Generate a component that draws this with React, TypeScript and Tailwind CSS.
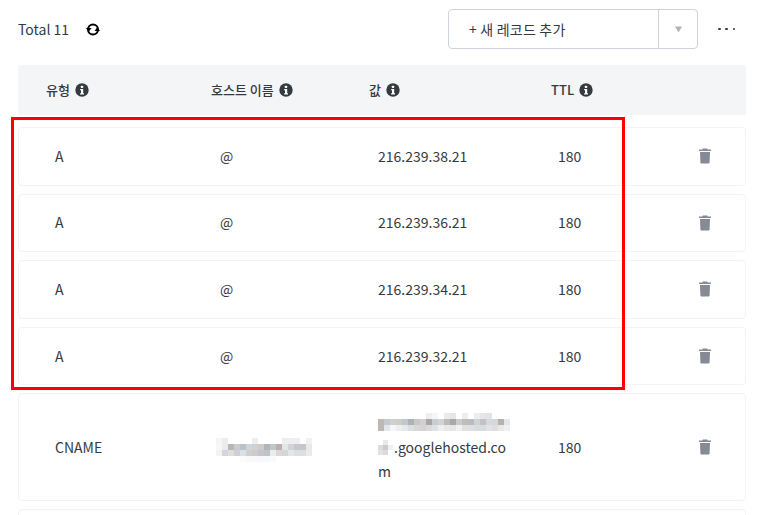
import React from "react";

const font = { fontFamily: '"Noto Sans CJK KR", "Noto Sans", sans-serif' };

function Info() {
  return (
    <svg width="14" height="14" viewBox="0 0 14 14" className="shrink-0">
      <circle cx="7" cy="7" r="6.7" fill="#343a40" />
      <rect x="5.800" y="2.700" width="2.400" height="2.200" rx="0.600" fill="#fff" />
      <path d="M5.200 6h3v4.200h.8v1.300H5.100v-1.300h.9V7.200h-.8z" fill="#fff" />
    </svg>
  );
}

function Trash() {
  return (
    <svg width="14" height="16" viewBox="0 0 14 16">
      <path d="M4.800 .6h4.400l.4 1H13v1.500H1V1.600h3.400z" fill="#868a94" />
      <path d="M2 3.900h10l-.4 10.700a.8.8 0 0 1-.8.8H3.200a.8.8 0 0 1-.8-.8z" fill="#868a94" />
    </svg>
  );
}

function Head({ label, className }: { label: string; className: string }) {
  return (
    <div className={`flex items-center gap-[5px] text-[13px] font-medium text-[#343a40] ${className}`}>
      <span>{label}</span>
      <Info />
    </div>
  );
}

function Row({ ip }: { ip: string }) {
  return (
    <div className="flex h-[58.6px] items-center rounded-[4px] border border-[#f1f3f5] text-[14px] text-[#343a40]">
      <div className="w-[201px] pl-[36px]">A</div>
      <div className="w-[158px]">@</div>
      <div className="w-[180px]">{ip}</div>
      <div className="w-[140px]">180</div>
      <Trash />
    </div>
  );
}

const hostRows = [
  ["#f5f5f5", "#ececec", "#fff", "#fff", "#fff", "#fff", "#eeeeee", "#fff", "#fff", "#fff", "#fff", "#eeeeee", "#eeeeee", "#eeeeee", "#fff", "#f0f0f0"],
  ["#f7f7f7", "#ebebeb", "#b9b6b3", "#c8ccd0", "#bdc2c8", "#ccd6de", "#d4d0cd", "#cfc9c8", "#b4b5ba", "#c2c6cb", "#b9b0ae", "#e2e6e9", "#d0d4d8", "#c5c8cc", "#c3c6cb", "#e8e8e8"],
  ["#f6f3ef", "#d3d6da", "#e0dedc", "#ccd0d4", "#dde0e3", "#cdd0d3", "#cccccc", "#c4c7ca", "#bfc3c7", "#ebeced", "#d8d8d8", "#d6d6d6", "#e3e5e6", "#dcdfe1", "#dcdfe1", "#eaeaea"],
  ["#fff", "#fff", "#fff", "#fff", "#fbfbfb", "#f9f9f9", "#f9f9f9", "#f8f8fb", "#f6f8fb", "#fafafa", "#fff", "#fff", "#fff", "#fff", "#fff", "#fff"],
];

const valueRows = [
  ["#fff", "#fff", "#fff", "#fff", "#fff", "#fff", "#fff", "#fff", "#f1eded", "#f3f7fa", "#fff", "#ebebeb", "#e6e6e6", "#fff", "#eeeeee", "#fff", "#eeeeee", "#e6e6e6", "#e3e3e3", "#fff", "#fff", "#fff"],
  ["#bdb9b4", "#c3cbd1", "#d2cfcd", "#cfcdca", "#c4c8cc", "#aeb3b8", "#c9c9c9", "#cfd1d3", "#a9a5a6", "#c6ced2", "#d5d2d0", "#b9bbbc", "#a8a8a8", "#c9cbcb", "#c0bdb8", "#b6bcc2", "#cfd3d6", "#bfc3c8", "#d6d9dc", "#d6d6d6", "#b5b1ac", "#e4e7ea"],
  ["#bdb9b4", "#e4e6e8", "#f3f6fa", "#eeeeee", "#e6e8ea", "#dcdfe1", "#d8d8d8", "#d6d3d2", "#d8dadc", "#dfe2e5", "#eeeff0", "#e8e8e8", "#e3e6e8", "#f0f0f0", "#e0e0e0", "#dddfe1", "#d9dcdf", "#d9dcdf", "#e3e3e5", "#dedede", "#e8e8ea", "#eef0f2"],
];

const stubRows = [
  ["#fff", "#e8e8e8", "#fff"],
  ["#dedcda", "#c8ccd2", "#eef0f3"],
  ["#e4e2e2", "#dcdcdc", "#fff"],
];

function Mosaic({ rows, cell }: { rows: string[][]; cell: number }) {
  const w = rows[0].length * cell;
  const h = rows.length * cell;
  return (
    <svg width={w} height={h} viewBox={`0 0 ${w} ${h}`} className="block shrink-0">
      {rows.map((row, r) =>
        row.map((c, i) => <rect key={`${r}-${i}`} x={i * cell} y={r * cell} width={cell} height={cell} fill={c} />)
      )}
    </svg>
  );
}

export default function App() {
  return (
    <div style={font} className="relative h-[515px] w-[757px] overflow-hidden bg-white pl-[18px] pr-[11px] pt-[9px]">
      <div className="flex h-[40px] items-center">
        <span className="text-[14px] text-[#343a40]">Total 11</span>
        <svg width="16" height="15" viewBox="0 0 16 15" className="ml-[16px]">
          <circle cx="8" cy="7.500" r="5" fill="none" stroke="#000" strokeWidth="2" />
          <path d="M1 6h5.500L3.700 9.800z" fill="#000" />
          <path d="M15 9H9.500l2.800-3.800z" fill="#000" />
        </svg>
        <div className="ml-auto flex h-[40px] w-[250px] rounded-[4px] border border-[#ced4da] text-[14px] tracking-[0.2px] text-[#343a40]">
          <div className="flex flex-1 items-center pl-[20px]">+ 새 레코드 추가</div>
          <div className="flex w-[39px] items-center justify-center border-l border-[#ced4da]">
            <svg width="7" height="7" viewBox="0 0 7 7"><path d="M0 .5h7L3.500 6.500z" fill="#adb5bd" /></svg>
          </div>
        </div>
        <div className="ml-[20px] mr-[11px] flex w-[17px] justify-between">
          <span className="h-[2.500px] w-[2.500px] rounded-full bg-[#343a40]" />
          <span className="h-[2.500px] w-[2.500px] rounded-full bg-[#343a40]" />
          <span className="h-[2.500px] w-[2.500px] rounded-full bg-[#343a40]" />
        </div>
      </div>

      <div className="mt-[16px] flex h-[50px] items-center rounded-[2px] bg-[#f4f5f7] pl-[28px]">
        <Head label="유형" className="w-[165px]" />
        <Head label="호스트 이름" className="w-[158px]" />
        <Head label="값" className="w-[182px]" />
        <Head label="TTL" className="" />
      </div>

      <div className="mt-[12px] flex flex-col gap-[8px]">
        <Row ip="216.239.38.21" />
        <Row ip="216.239.36.21" />
        <Row ip="216.239.34.21" />
        <Row ip="216.239.32.21" />
        <div className="flex h-[108px] items-center rounded-[4px] border border-[#f1f3f5] text-[14px] text-[#343a40]">
          <div className="w-[197px] pl-[36px]">CNAME</div>
          <div className="w-[162px] pt-[6px]"><Mosaic rows={hostRows} cell={6} /></div>
          <div className="w-[180px] pr-[30px] leading-[24px]">
            <div className="h-[24px] pt-[2px]"><Mosaic rows={valueRows} cell={6} /></div>
            <div className="flex h-[24px] items-center"><div className="mr-[1px]"><Mosaic rows={stubRows} cell={5} /></div>.googlehosted.co</div>
            <div>m</div>
          </div>
          <div className="w-[140px]">180</div>
          <Trash />
        </div>
        <div className="h-[40px] rounded-[4px] border border-[#f1f3f5]" />
      </div>

      <div className="pointer-events-none absolute left-[11px] top-[117px] h-[273px] w-[614px] border-[3px] border-[#ff0000]" />
    </div>
  );
}
